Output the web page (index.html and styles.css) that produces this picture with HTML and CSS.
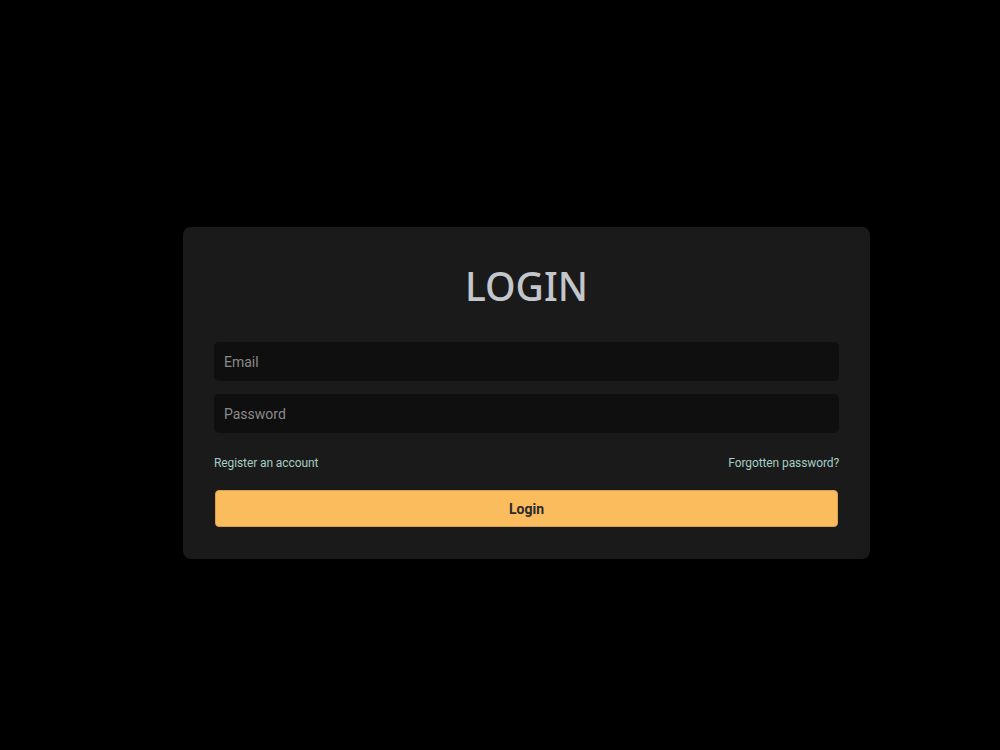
FILE: index.html
```html
<!DOCTYPE html>
<html lang="en">
<head>
	<meta charset="UTF-8">
	<title>Login</title>
	<link rel="stylesheet" href="styles.css">
</head>
<body>
	<section class="page">
		<form class="card">
			<h1 class="title">LOGIN</h1>
			<input class="field" type="email" placeholder="Email">
			<input class="field" type="password" placeholder="Password">
			<div class="links">
				<a href="#">Register an account</a>
				<a href="#">Forgotten password?</a>
			</div>
			<button class="btn" type="button">Login</button>
		</form>
	</section>
</body>
</html>
```

FILE: styles.css
```css
*{margin:0;padding:0;box-sizing:border-box}
html,body{background:#000;height:100%}
body{font-family:Roboto,"Liberation Sans",sans-serif}
.page{
	padding:227px 0 0 183px;
}
.card{
	display:flex;
	flex-direction:column;
	width:687px;
	height:332px;
	padding:36px 31px 0 31px;
	background:#1a1a1a;
	border-radius:8px;
}
.title{
	font-family:"Noto Sans",sans-serif;
	font-weight:500;
	font-size:39px;
	line-height:46px;
	color:#c3c7cc;
	text-align:center;
	margin-bottom:33px;
}
.field{
	height:39px;
	width:100%;
	padding:0 10px;
	border:none;
	outline:none;
	border-radius:5px;
	background:#0f0f0f;
	font-family:Roboto,sans-serif;
	font-size:14px;
	color:#ccc;
	margin-bottom:13px;
}
.field::placeholder{color:#8a8a8a}
.links{
	display:flex;
	justify-content:space-between;
	margin-top:10px;
	margin-bottom:20px;
	line-height:14px;
}
.links a{
	font-size:12px;
	letter-spacing:-0.1px;
	color:#a5ccc4;
	text-decoration:none;
}
.btn{
	height:37px;
	margin:0 1px;
	border:1px solid #d9a14e;
	border-radius:4px;
	background:#fbbc5e;
	font-family:Roboto,sans-serif;
	font-weight:700;
	font-size:14px;
	color:#2a2a2a;
}
```
